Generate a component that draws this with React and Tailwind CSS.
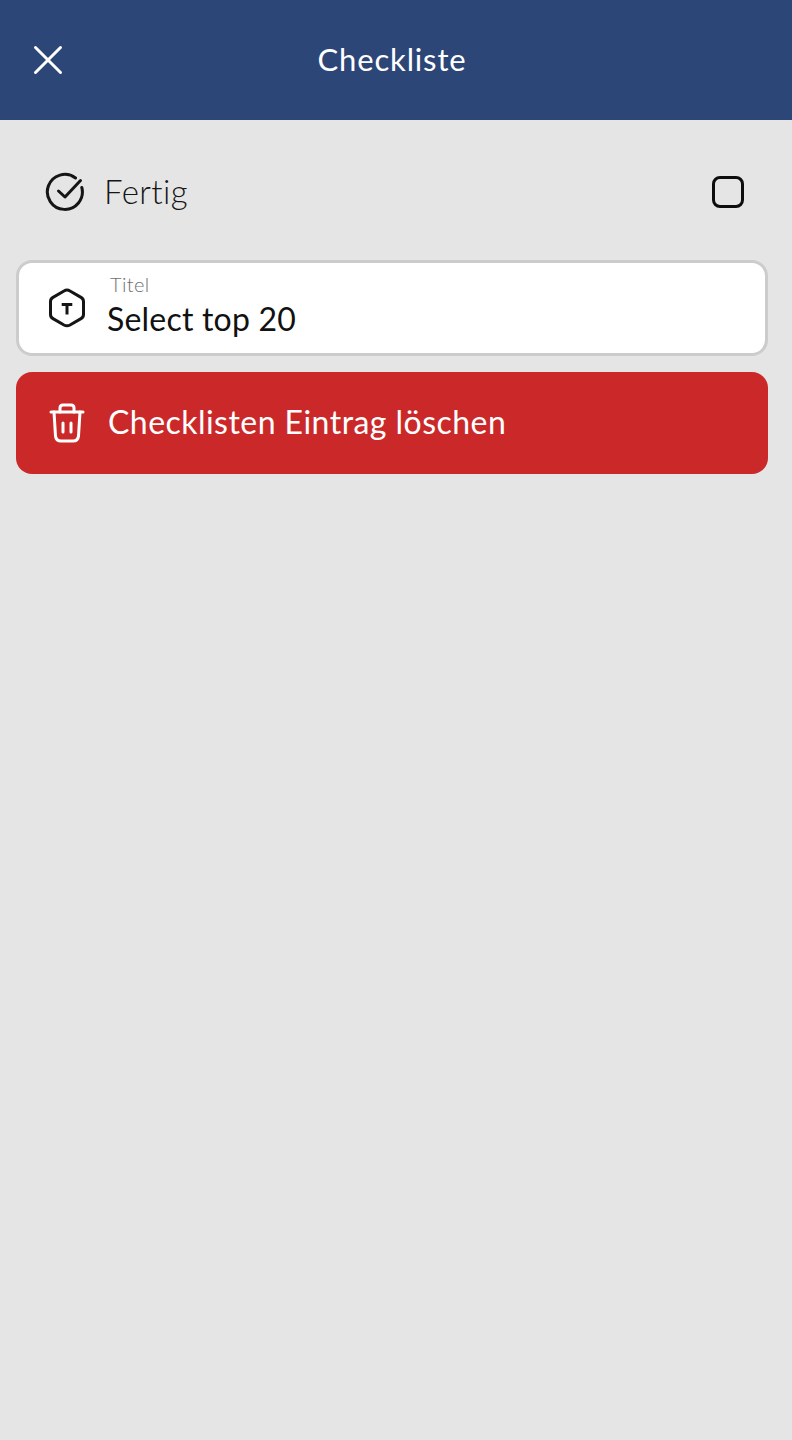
export default function App() {
  return (
    <div className="min-h-[1440px] bg-[#e5e5e5] font-['Lato',sans-serif]">
      <header className="relative flex h-[120px] items-center justify-center bg-[#2c4677] pb-[2px] pr-2">
        <button className="absolute left-[32px] top-[44px] h-8 w-8">
          <svg viewBox="0 0 32 32" className="h-8 w-8" fill="none" stroke="#fff" strokeWidth="3" strokeLinecap="round">
            <path d="M3.500 3.500 L28.500 28.500 M28.500 3.500 L3.500 28.500" />
          </svg>
        </button>
        <h1 className="text-[31px] font-normal leading-none tracking-[0.85px] text-white">Checkliste</h1>
      </header>
      <main className="flex flex-col pl-4 pr-6">
        <div className="flex h-[140px] items-center pl-[29px] pr-6 pt-1">
          <svg viewBox="0 0 40 40" className="h-10 w-10" fill="none" stroke="#151515" strokeWidth="3" strokeLinecap="round" strokeLinejoin="round">
            <path d="M36.800 15.500 A17.500 17.500 0 1 1 30.500 6" />
            <path d="M13.500 19 L20 25 L35.500 8.500" />
          </svg>
          <span className="mb-[2px] ml-[19px] flex-1 text-[33px] font-light leading-none tracking-[0.4px] text-[#151515]">Fertig</span>
          <span className="h-8 w-8 rounded-lg border-[3px] border-[#0d0d0d]" />
        </div>
        <div className="flex h-[96px] items-center rounded-2xl border-[3px] border-[#cccccc] bg-white pl-[28px]">
          <svg viewBox="0 0 40 40" className="h-10 w-10 shrink-0" fill="none" stroke="#151515" strokeWidth="3" strokeLinejoin="round">
            <path d="M20 2 Q21.500 2 23 3 L34 9.400 Q36.500 10.800 36.500 13.500 L36.500 26.500 Q36.500 29.200 34 30.600 L23 37 Q20 38.600 17 37 L6 30.600 Q3.500 29.200 3.500 26.500 L3.500 13.500 Q3.500 10.800 6 9.400 L17 3 Q18.500 2 20 2 Z" />
            <path d="M16.200 16.500 H23.800 M20 16.500 V25" strokeLinecap="square" />
          </svg>
          <div className="mb-[2px] ml-[20px] flex flex-col gap-[6px]">
            <span className="ml-[3px] text-[20px] font-light leading-[18px] tracking-[0.4px] text-[#707070]">Titel</span>
            <span className="text-[32px] leading-[40px] tracking-[0.2px] text-[#111]">Select top 20</span>
          </div>
        </div>
        <button className="mt-4 flex h-[102px] items-center rounded-2xl bg-[#cb2929] pl-[33px]">
          <svg viewBox="0 0 36 40" className="h-10 w-9 shrink-0" fill="none" stroke="#fff" strokeWidth="3" strokeLinecap="round" strokeLinejoin="round">
            <path d="M2 9 H34" />
            <path d="M11 9 V5 Q11 2 14 2 H22 Q25 2 25 5 V9" />
            <path d="M5 9 L6.500 33 Q7 38 12 38 H24 Q29 38 29.500 33 L31 9" />
            <path d="M14 20 V29 M22 20 V29" />
          </svg>
          <span className="mb-[2px] ml-[23px] text-[32px] leading-none tracking-[0.46px] text-white">Checklisten Eintrag löschen</span>
        </button>
      </main>
    </div>
  );
}
